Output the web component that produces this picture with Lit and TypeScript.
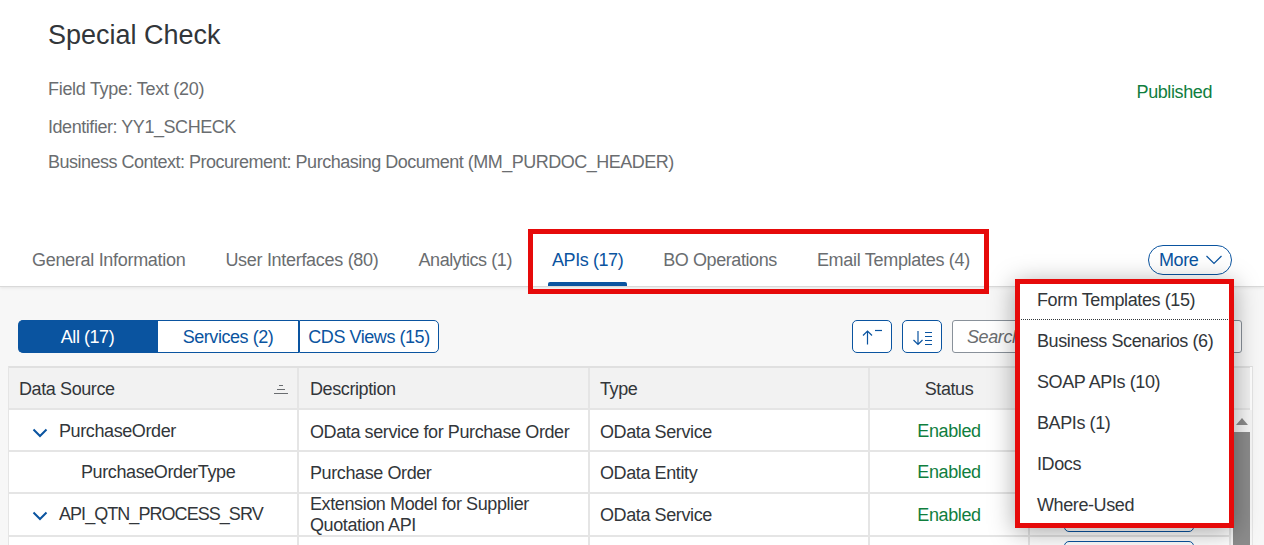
import { LitElement, html, css, svg } from 'lit';
import { customElement } from 'lit/decorators.js';

const chevron = html`<svg class="chev" width="16" height="10" viewBox="0 0 16 10"><path d="M1.500 1.500 8 8l6.500-6.500" fill="none" stroke="currentColor" stroke-width="2"/></svg>`;

const rows = [
  { source: 'PurchaseOrder', expand: true, desc: 'OData service for Purchase Order', type: 'OData Service', h: 42, cls: 'shift lead' },
  { source: 'PurchaseOrderType', expand: false, desc: 'Purchase Order', type: 'OData Entity', h: 42, cls: 'shift' },
  { source: 'API_QTN_PROCESS_SRV', expand: true, caps: true, desc: 'Extension Model for Supplier Quotation API', type: 'OData Service', h: 43, cls: '' },
  { source: '', expand: false, desc: '', type: '', h: 43, cls: '' },
];

@customElement('app-root')
export class AppRoot extends LitElement {
  static styles = css`
:host {
  display: block;
  position: relative;
  height: 545px;
  overflow: hidden;
  background: #f7f7f7;
  font-family: "Liberation Sans", Arial, sans-serif;
  font-size: 18px;
  letter-spacing: -0.4px;
  color: #32363a;
}

.header {
  height: 287px;
  box-sizing: border-box;
  background: #fff;
  border-bottom: 1px solid #d9d9d9;
  box-shadow: 0 1px 3px rgba(0, 0, 0, 0.08);
  display: flex;
  flex-direction: column;
  position: relative;
}

.top {
  height: 245px;
  box-sizing: border-box;
  padding: 17px 52px 0 48px;
  display: flex;
  justify-content: space-between;
}

h1 {
  margin: 0 0 23px;
  font-size: 27px;
  line-height: 36px;
  font-weight: 400;
  letter-spacing: 0;
}

.meta {
  color: #6a6d70;
  line-height: 26px;
  margin-bottom: 12px;
  letter-spacing: -0.3px;
}

.meta.near {
  margin-bottom: 9px;
  letter-spacing: -0.45px;
}

.meta.long {
  letter-spacing: -0.5px;
}

.published {
  color: #107e3e;
  margin-top: 62px;
  line-height: 26px;
}

.tabs {
  display: flex;
  align-items: flex-start;
  padding-left: 32px;
  gap: 40px;
  color: #6a6d70;
  flex: 1;
  letter-spacing: -0.3px;
}

.tab {
  line-height: 30px;
  position: relative;
  height: 41px;
}

.tab.tight {
  letter-spacing: -0.42px;
}

.tab.active {
  color: #0a54a0;
}

.tab.active::after {
  content: "";
  position: absolute;
  left: -4px;
  right: -4px;
  bottom: 0;
  height: 4px;
  background: #0a54a0;
  border-radius: 2px 2px 0 0;
}

.more {
  margin-left: auto;
  margin-right: 32px;
  width: 84px;
  height: 30px;
  box-sizing: border-box;
  border: 1px solid #0a54a0;
  border-radius: 15px;
  color: #0a54a0;
  display: flex;
  align-items: center;
  gap: 7px;
  padding-left: 10px;
  letter-spacing: -0.4px;
}

.toolbar {
  display: flex;
  align-items: center;
  height: 33px;
  margin: 33px 22px 13px 18px;
}

.seg {
  display: flex;
  height: 33px;
  color: #0a54a0;
  letter-spacing: -0.45px;
}

.seg div {
  width: 141px;
  box-sizing: border-box;
  border: 1px solid #0a54a0;
  border-left-width: 0;
  background: #fff;
  display: flex;
  align-items: center;
  justify-content: center;
  padding-top: 2px;
}

.seg div:first-child {
  width: 140px;
  background: #0a54a0;
  color: #fff;
  border-radius: 5px 0 0 5px;
}

.seg div:last-child {
  width: 140px;
  border-left-width: 1px;
  border-radius: 0 5px 5px 0;
}

.ibtn {
  width: 40px;
  height: 33px;
  box-sizing: border-box;
  border: 1px solid #0a54a0;
  border-radius: 5px;
  background: #fff;
  display: flex;
  align-items: center;
  justify-content: center;
  margin-right: 10px;
  color: #0a54a0;
}

.ibtn.first {
  margin-left: auto;
}

.search {
  width: 290px;
  height: 33px;
  box-sizing: border-box;
  border: 1px solid #89919a;
  border-radius: 3px;
  background: #fff;
  color: #6a6d70;
  font-style: italic;
  line-height: 32px;
  padding-left: 14px;
}

.table {
  margin-left: 8px;
  width: 1243px;
  border-top: 1px solid #e0e0e0;
  border-left: 1px solid #e5e5e5;
  border-right: 1px solid #e5e5e5;
  background: #fff;
}

.row {
  display: grid;
  grid-template-columns: 290px 291px 280px 160px 201px;
  box-sizing: border-box;
  border-bottom: 2px solid #e5e5e5;
}

.head {
  height: 43px;
  background: #f2f2f2;
  border-top: 1px solid #e0e0e0;
  width: 1241px;
  grid-template-columns: 290px 291px 280px 160px 220px;
}

.cell {
  border-right: 2px solid #e5e5e5;
  padding: 0 10px;
  display: flex;
  align-items: center;
  box-sizing: border-box;
  line-height: 21px;
}

.cell:nth-child(2) {
  padding-left: 11px;
}

.head .cell {
  justify-content: space-between;
  padding-top: 2px;
}

.head .cell:first-child {
  padding-right: 9px;
}

.head .cell:last-child {
  border-right: 0;
}

.row.shift .cell {
  padding-top: 2px;
}

.row.lead .cell {
  padding-top: 4px;
}

.center {
  justify-content: center !important;
}

.body {
  display: flex;
}

.rows {
  width: 1222px;
}

.src {
  padding-left: 40px;
  position: relative;
  top: -1px;
}

.src.child {
  padding-left: 62px;
}

.src.caps {
  letter-spacing: -0.95px;
}

.src .chev {
  position: absolute;
  left: 13px;
  top: 50%;
  margin-top: -3px;
  color: #0a54a0;
}

.enabled {
  color: #107e3e;
}

.row.shift .enabled {
  position: relative;
  top: -1px;
}

.action {
  width: 130px;
  height: 33px;
  box-sizing: border-box;
  border: 1px solid #0a54a0;
  border-radius: 5px;
  background: #fff;
  margin-left: 24px;
}

.bar {
  flex: 1;
  background: #f7f7f7;
  display: flex;
  flex-direction: column;
  align-items: center;
  padding: 0 2px;
}

.up {
  height: 22px;
  display: flex;
  align-items: center;
}

.up i {
  border: 6px solid transparent;
  border-top-width: 0;
  border-bottom: 7px solid #8c8c8c;
}

.thumb {
  flex: 1;
  align-self: stretch;
  background: #8c8c8c;
}

.popover {
  position: absolute;
  left: 1015px;
  top: 279px;
  width: 219px;
  height: 249px;
  box-sizing: border-box;
  border: 5px solid #e60a0a;
  background: #fff;
  box-shadow: 0 4px 24px rgba(0, 0, 0, 0.35);
  overflow: hidden;
  letter-spacing: -0.4px;
}

.item {
  height: 41px;
  line-height: 41px;
  padding-left: 17px;
  white-space: nowrap;
}

.item.first {
  height: 36px;
  line-height: 33px;
  border-bottom: 1px dotted #32363a;
  box-sizing: border-box;
  margin: 0 1px 1px;
  padding-left: 16px;
}

.mark {
  position: absolute;
  left: 528px;
  top: 229px;
  width: 461px;
  height: 65px;
  box-sizing: border-box;
  border: 5px solid #e60a0a;
}
  `;

  render() {
    return html`
      <div class="header">
        <div class="top">
          <div>
            <h1>Special Check</h1>
            <div class="meta">Field Type: Text (20)</div>
            <div class="meta near">Identifier: YY1_SCHECK</div>
            <div class="meta long">Business Context: Procurement: Purchasing Document (MM_PURDOC_HEADER)</div>
          </div>
          <div class="published">Published</div>
        </div>
        <div class="tabs">
          <div class="tab">General Information</div>
          <div class="tab">User Interfaces (80)</div>
          <div class="tab tight">Analytics (1)</div>
          <div class="tab tight active">APIs (17)</div>
          <div class="tab tight">BO Operations</div>
          <div class="tab">Email Templates (4)</div>
          <div class="more">More
            <svg width="18" height="10" viewBox="0 0 18 10"><path d="M1.500 1 9 8.500 16.500 1" fill="none" stroke="currentColor" stroke-width="1.200"/></svg>
          </div>
        </div>
      </div>
      <div class="toolbar">
        <div class="seg">
          <div>All (17)</div>
          <div>Services (2)</div>
          <div>CDS Views (15)</div>
        </div>
        <div class="ibtn first">
          <svg width="22" height="20" viewBox="0 0 22 20" fill="none" stroke="currentColor" stroke-width="1.2">
            <path d="M6.500 17.500V4M2 8.500 6.500 4 11 8.500"/>
            <path d="M14 3.500h7"/>
          </svg>
        </div>
        <div class="ibtn">
          <svg width="22" height="20" viewBox="0 0 22 20" fill="none" stroke="currentColor" stroke-width="1.2">
            <path d="M7 4v13.500M2.500 13 7 17.500 11.500 13"/>
            <path d="M14 5.500h7M14 9.500h7M14 13.500h7M14 17.500h7"/>
          </svg>
        </div>
        <div class="search">Search</div>
      </div>
      <div class="table">
        <div class="row head">
          <div class="cell">Data Source
            <svg width="14" height="11" viewBox="0 0 14 11" fill="none" stroke="#6a6d70" stroke-width="1">
              ${svg`<path d="M5 1.500h4M3 5.500h8M0 9.500h14"/>`}
            </svg>
          </div>
          <div class="cell">Description</div>
          <div class="cell">Type</div>
          <div class="cell center">Status</div>
          <div class="cell"></div>
        </div>
        <div class="body">
          <div class="rows">
            ${rows.map(r => html`
              <div class="row ${r.cls}" style="height:${r.h}px">
                <div class="cell"><span class="src ${r.expand ? '' : 'child'} ${r.caps ? 'caps' : ''}">${r.expand ? chevron : ''}${r.source}</span></div>
                <div class="cell">${r.desc}</div>
                <div class="cell">${r.type}</div>
                <div class="cell center"><span class="enabled">${r.source ? 'Enabled' : ''}</span></div>
                <div class="cell"><div class="action"></div></div>
              </div>
            `)}
          </div>
          <div class="bar">
            <div class="up"><i></i></div>
            <div class="thumb"></div>
          </div>
        </div>
      </div>
      <div class="mark"></div>
      <div class="popover">
        <div class="item first">Form Templates (15)</div>
        <div class="item">Business Scenarios (6)</div>
        <div class="item">SOAP APIs (10)</div>
        <div class="item">BAPIs (1)</div>
        <div class="item">IDocs</div>
        <div class="item">Where-Used</div>
      </div>
    `;
  }
}

declare global {
  interface HTMLElementTagNameMap {
    'app-root': AppRoot;
  }
}
